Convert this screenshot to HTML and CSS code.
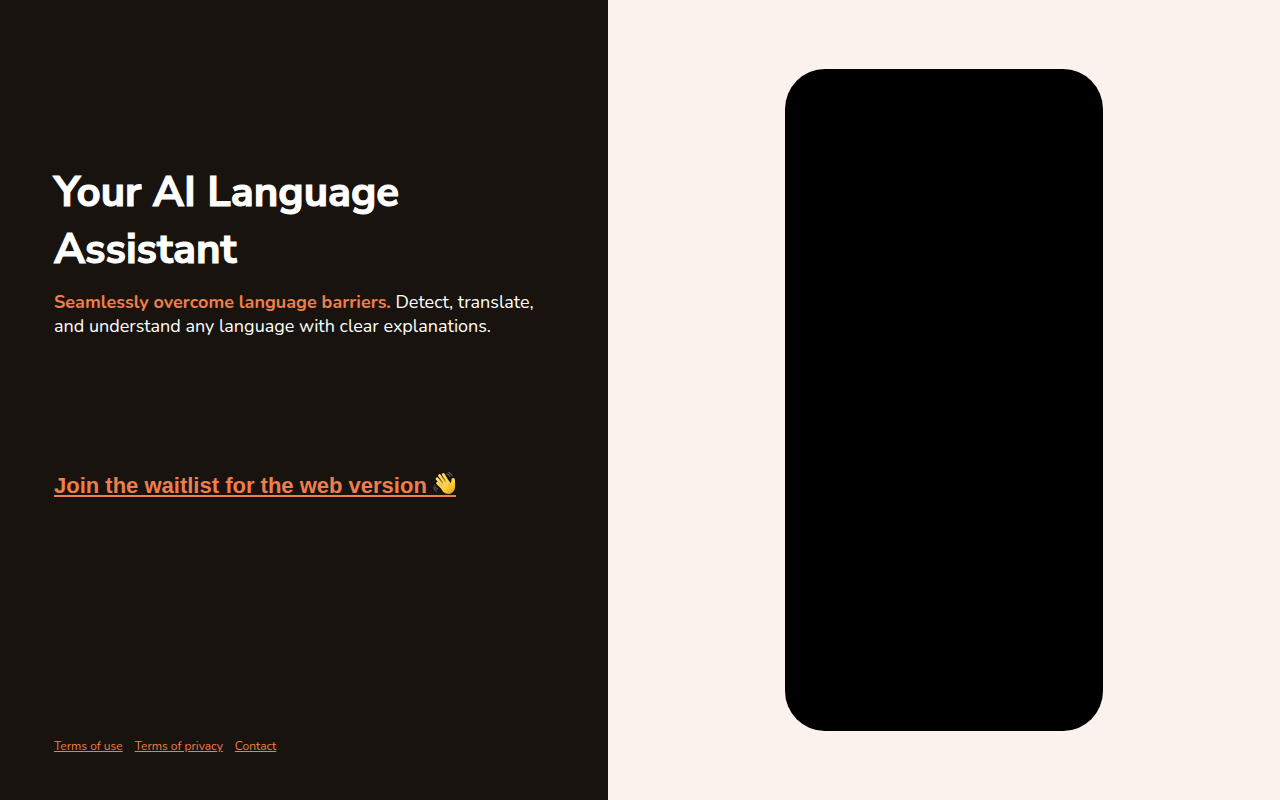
FILE: index.html
```html
<!DOCTYPE html>
<html lang="en">
<head>
	<meta charset="UTF-8">
	<meta name="viewport" content="width=device-width, initial-scale=1">
	<title>Your AI Language Assistant</title>
	<link rel="stylesheet" href="styles.css">
</head>
<body>
	<div class="page">
		<div class="intro">
			<main class="content">
				<h1>Your AI Language Assistant</h1>
				<p class="lead"><strong>Seamlessly overcome language barriers.</strong> Detect, translate, and understand any language with clear explanations.</p>
				<a class="waitlist" href="#waitlist">Join the waitlist for the web version
					<svg class="wave" viewBox="0 0 24 24" role="img" aria-label="waving hand">
						<defs>
							<linearGradient id="skin" gradientUnits="userSpaceOnUse" x1="8" y1="5" x2="20" y2="23">
								<stop offset="0" stop-color="#ffe066"/>
								<stop offset="0.6" stop-color="#ffcf3f"/>
								<stop offset="1" stop-color="#e69b1c"/>
							</linearGradient>
						</defs>
						<path d="M14.6 2.6q2.2.6 3.2 2.8M16.4.9q2.6 1 3.5 3.6M1.8 14.6q.4 2.6 2.8 3.8M.8 16.8q.6 2.6 2.8 3.8" fill="none" stroke="#4f4f52" stroke-width="1.4" stroke-linecap="round"/>
						<path d="M10.8 3.2 16 12M6.8 4.2 13 13M4.2 7.6 11 15M4.8 12.2 11 18" fill="none" stroke="url(#skin)" stroke-width="2.9" stroke-linecap="round"/>
						<path d="M9.5 12.8 15.5 8.8l3 3.2c.8-1.4.5-3 .9-4.3.5-1.4 3-1.3 3.3.2.5 2.3.2 4.5.4 6.7.3 3.3-1.2 6.6-3.7 8-2.9 1.6-6.4.8-8.6-1.2L7.8 17z" fill="url(#skin)"/>
						<path d="M18.5 12c-1.5.9-2.2 2.2-1.9 4" fill="none" stroke="#d99a20" stroke-width=".6" stroke-linecap="round"/>
						<path d="m9.2 6 3.6 5.2M6.7 9l3.8 4.4M6 12l3.4 3.2" fill="none" stroke="#b97d17" stroke-width=".4" stroke-linecap="round"/>
					</svg>
				</a>
			</main>
			<footer class="links">
				<a href="#terms">Terms of use</a>
				<a href="#privacy">Terms of privacy</a>
				<a href="#contact">Contact</a>
			</footer>
		</div>
		<div class="preview">
			<div class="phone"></div>
		</div>
	</div>
</body>
</html>
```
FILE: styles.css
```css
*{
	box-sizing: border-box;
	margin: 0;
	padding: 0;
}
body{
	background: #fcf2ed;
	color: #fff;
	font-family: Nunito, Lato, "Open Sans", sans-serif;
}
.page{
	display: grid;
	grid-template-columns: 47.5% 1fr;
	min-height: 100vh;
}
.intro{
	display: flex;
	flex-direction: column;
	padding: 0 54px 46px;
	background: #18130e;
}
.content{
	flex: 1;
	display: flex;
	flex-direction: column;
	align-items: flex-start;
	padding-top: 164px;
}
h1{
	max-width: 420px;
	font-family: "Nunito Sans", Nunito, Lato, sans-serif;
	font-size: 42px;
	font-weight: 700;
	line-height: 57px;
	-webkit-text-stroke: 1px #fff;
}
.lead{
	margin-top: 12px;
	font-size: 18px;
	font-weight: 400;
	line-height: 24px;
}
.lead strong{
	color: #ee7f4b;
	font-weight: 700;
}
.waitlist{
	display: flex;
	align-items: flex-end;
	gap: 6px;
	height: 26px;
	margin-top: 133px;
	border-bottom: 2px solid #ee7f4b;
	color: #ee7f4b;
	font-family: "Liberation Sans", Arial, sans-serif;
	font-size: 22px;
	font-weight: 700;
	line-height: 18px;
	text-decoration: none;
}
.wave{
	width: 23px;
	height: 24px;
}
.links{
	display: flex;
	flex-wrap: wrap;
	gap: 12px;
	font-size: 12px;
	line-height: 16px;
}
.links a{
	color: #ee7f4b;
}
.preview{
	display: flex;
	align-items: center;
	justify-content: center;
	padding: 40px;
}
.phone{
	width: 318px;
	max-width: 100%;
	aspect-ratio: 318 / 662;
	border-radius: 40px;
	background: #000;
}
```
